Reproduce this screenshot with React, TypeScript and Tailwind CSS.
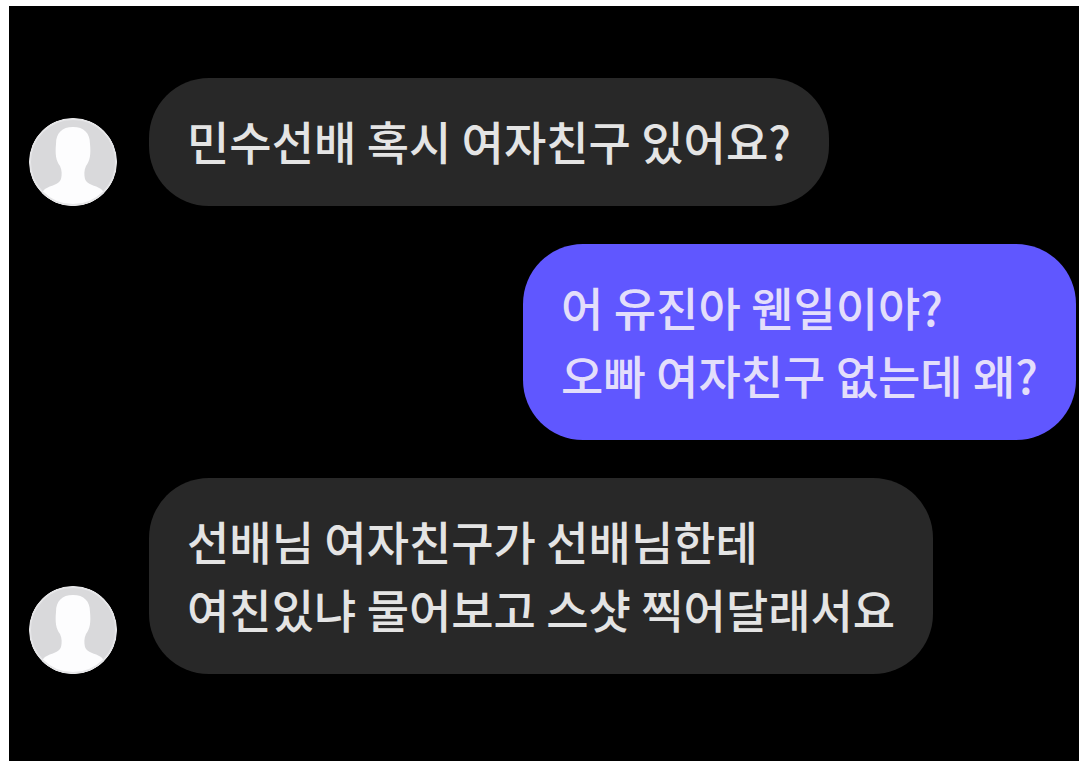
type Message = {
  from: 'them' | 'me';
  lines: string[];
};

const messages: Message[] = [
  { from: 'them', lines: ['민수선배 혹시 여자친구 있어요?'] },
  { from: 'me', lines: ['어 유진아 웬일이야?', '오빠 여자친구 없는데 왜?'] },
  { from: 'them', lines: ['선배님 여자친구가 선배님한테', '여친있냐 물어보고 스샷 찍어달래서요'] },
];

function Avatar() {
  return (
    <svg viewBox="0 0 88 88" className="size-[88px] shrink-0 rounded-full" aria-hidden="true">
      <circle cx="44" cy="44" r="44" fill="#d9d9db" />
      <path
        fill="#fdfdfe"
        d="M44 9C33 9 27 15 27 26C26 36 27 43 31 48C33 52 33 57 32 61C30 67 22 67 16 71C12 74 12 80 14 88H74C76 80 76 74 72 71C66 67 58 67 56 61C55 57 55 52 57 48C61 43 62 36 61 26C61 15 55 9 44 9Z"
      />
      <circle cx="44" cy="44" r="43" fill="none" stroke="#e6e6e8" strokeWidth="2" />
    </svg>
  );
}

function Bubble({ message }: { message: Message }) {
  const color = message.from === 'me' ? 'bg-[#6057ff] text-[#e3defb]' : 'bg-[#282828] text-[#e4e4e4]';
  return (
    <div className={`rounded-[60px] px-[38px] pt-7 pb-8 text-[46px] leading-[68px] font-medium ${color}`}>
      {message.lines.map((line) => (
        <p key={line}>{line}</p>
      ))}
    </div>
  );
}

export default function App() {
  return (
    <div className="flex min-h-screen bg-white px-[9px] py-[6px] font-['Noto_Sans_CJK_KR',sans-serif]">
      <main className="flex flex-1 flex-col gap-[38px] bg-black pt-[72px] pr-[3px] pl-5">
        {messages.map((message, i) =>
          message.from === 'me' ? (
            <div key={i} className="flex justify-end">
              <Bubble message={message} />
            </div>
          ) : (
            <div key={i} className="flex items-end gap-8">
              <Avatar />
              <Bubble message={message} />
            </div>
          ),
        )}
      </main>
    </div>
  );
}
